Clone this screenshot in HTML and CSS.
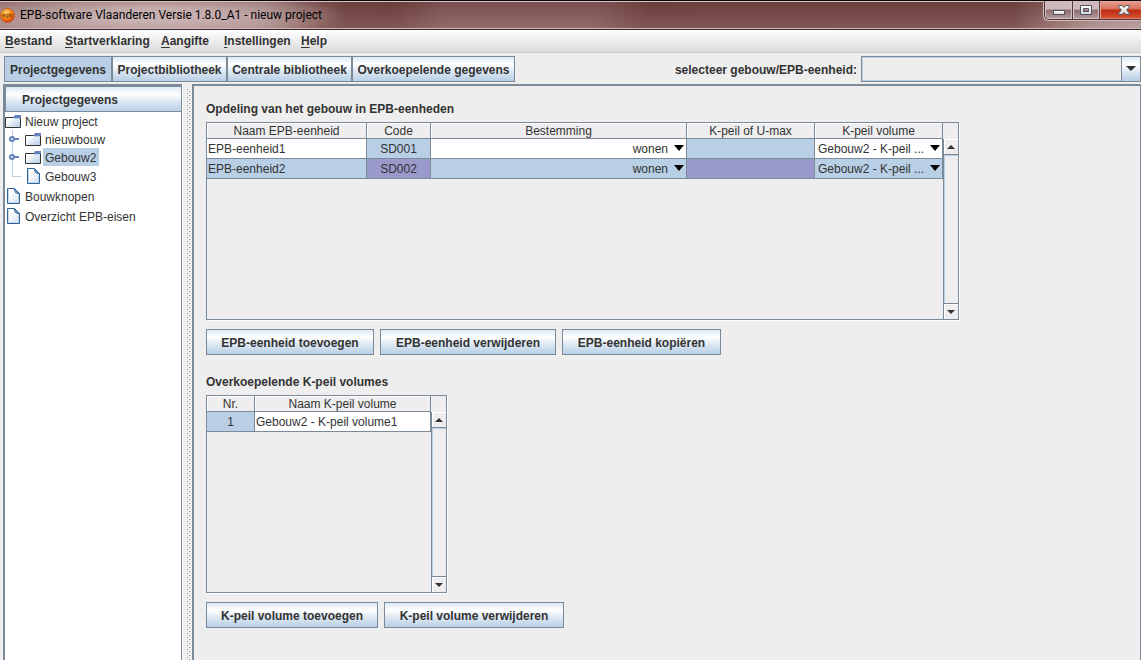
FILE: index.html
```html
<!DOCTYPE html>
<html lang="nl">
<head>
<meta charset="utf-8">
<title>EPB-software Vlaanderen Versie 1.8.0_A1 - nieuw project</title>
<link rel="stylesheet" href="styles.css">
</head>
<body>
<svg class="defs" width="0" height="0" aria-hidden="true">
  <defs>
    <linearGradient id="folder-fill" x1="0" y1="0" x2="1" y2="1">
      <stop offset="0.2" stop-color="#ffffff"/><stop offset="1" stop-color="#b0c9e4"/>
    </linearGradient>
    <linearGradient id="page-fill" x1="0" y1="0" x2="1" y2="1">
      <stop offset="0.3" stop-color="#ffffff"/><stop offset="1" stop-color="#cfdff0"/>
    </linearGradient>
    <radialGradient id="logo-fill" cx="0.4" cy="0.3" r="0.7">
      <stop offset="0" stop-color="#ffd070"/><stop offset="0.5" stop-color="#f59018"/><stop offset="1" stop-color="#d8400c"/>
    </radialGradient>
    <linearGradient id="glyph-fill" x1="0" y1="0" x2="0" y2="1">
      <stop offset="0" stop-color="#ffffff"/><stop offset="1" stop-color="#d4d4d4"/>
    </linearGradient>
  </defs>
  <symbol id="folder" viewBox="0 0 16 13">
    <path d="M.5 2.500H15.500V12.500H.5Z" fill="url(#folder-fill)" stroke="#333"/>
    <path d="M1.500 11.500V3.500H9" fill="none" stroke="#fff"/>
    <path d="M8 3 10 0H16V3Z" fill="#6382bf"/>
    <path d="M9 3.500H15" stroke="#b8cfe5"/>
  </symbol>
  <symbol id="page" viewBox="0 0 13 16">
    <path d="M.5.5H7.500L12.500 5.500V15.500H.5Z" fill="url(#page-fill)" stroke="#2f6296"/>
    <path d="M7 .5 8.500 4.500 12.500 6Z" fill="#b8cfe5" stroke="#2f6296"/>
    <path d="M1.500 1.500V14.500H11.500V7" fill="none" stroke="#c3d7ea"/>
  </symbol>
  <symbol id="handle" viewBox="0 0 11 6">
    <circle cx="3" cy="3" r="2" fill="#fff" stroke="#6382bf" stroke-width="2"/>
    <path d="M6 3H10" stroke="#6382bf" stroke-width="2"/>
  </symbol>
  <symbol id="down" viewBox="0 0 10 5" preserveAspectRatio="none"><path d="M0 0H10L5 5Z" fill="currentColor"/></symbol>
  <symbol id="up" viewBox="0 0 10 5" preserveAspectRatio="none"><path d="M0 5H10L5 0Z" fill="currentColor"/></symbol>
</svg>

<div class="window">
  <header class="titlebar">
    <svg class="logo" viewBox="0 0 15 15" aria-hidden="true">
      <circle cx="7.500" cy="7.500" r="7" fill="url(#logo-fill)" stroke="#b84a18" stroke-width=".6"/>
      <g fill="none" stroke="#7d3a08" stroke-width=".8"><path d="M5.300 7.300H3.200M5.200 8.700H3.800A1.300 1.300 0 1 1 5.300 7.300M6.800 10V6.300H7.600A1.200 1.200 0 1 1 7.600 8.700H6.800M10 5V8.700H11A1.200 1.200 0 1 0 11 6.300H10"/></g>
    </svg>
    <span class="title">EPB-software Vlaanderen Versie 1.8.0_A1 - nieuw project</span>
    <div class="window-buttons">
      <button class="win-btn min" type="button" aria-label="Minimaliseren"><svg width="12" height="6" viewBox="0 0 12 6"><rect x=".5" y=".5" width="11" height="4" fill="url(#glyph-fill)" stroke="#53535f"/></svg></button>
      <button class="win-btn max" type="button" aria-label="Maximaliseren"><svg width="12" height="10" viewBox="0 0 12 10"><path d="M.5.5H11.500V9.500H.5ZM3.500 3.500V6.500H8.500V3.500Z" fill="url(#glyph-fill)" fill-rule="evenodd" stroke="#53535f"/></svg></button>
      <button class="win-btn close" type="button" aria-label="Sluiten"><svg width="12" height="10" viewBox="0 0 12 10"><path d="M.7.5H4L6 2.500 8 .5H11.300V2L8.600 5 11.300 8V9.500H8L6 7.500 4 9.500H.7V8L3.400 5 .7 2Z" fill="url(#glyph-fill)" stroke="#53535f"/></svg></button>
    </div>
  </header>

  <nav class="menubar" aria-label="Menu">
    <button class="m-file" type="button"><u>B</u>estand</button>
    <button class="m-start" type="button"><u>S</u>tartverklaring</button>
    <button class="m-report" type="button"><u>A</u>angifte</button>
    <button class="m-settings" type="button"><u>I</u>nstellingen</button>
    <button type="button"><u>H</u>elp</button>
  </nav>

  <div class="toolbar">
    <div class="tabs">
      <button class="tab tab-project selected" type="button">Projectgegevens</button>
      <button class="tab tab-library" type="button">Projectbibliotheek</button>
      <button class="tab tab-central" type="button">Centrale bibliotheek</button>
      <button class="tab tab-global" type="button">Overkoepelende gegevens</button>
    </div>
    <label class="picker-label" for="unit">selecteer gebouw/EPB-eenheid:</label>
    <div class="picker">
      <select id="unit"><option></option></select>
      <span class="picker-arrow"><svg width="10" height="5"><use href="#down"/></svg></span>
    </div>
  </div>

  <div class="workspace">
    <aside class="sidebar">
      <button class="side-head" type="button">Projectgegevens</button>
      <ul class="tree">
        <li><div class="node"><svg class="folder"><use href="#folder"/></svg><span>Nieuw project</span></div>
          <ul class="branch">
            <li class="node"><svg class="handle"><use href="#handle"/></svg><svg class="folder"><use href="#folder"/></svg><span>nieuwbouw</span></li>
            <li class="node"><svg class="handle"><use href="#handle"/></svg><svg class="folder"><use href="#folder"/></svg><span class="picked">Gebouw2</span></li>
            <li class="node leaf last"><i class="elbow"></i><svg class="page"><use href="#page"/></svg><span>Gebouw3</span></li>
          </ul>
        </li>
        <li class="node leaf"><svg class="page"><use href="#page"/></svg><span>Bouwknopen</span></li>
        <li class="node leaf"><svg class="page"><use href="#page"/></svg><span>Overzicht EPB-eisen</span></li>
      </ul>
    </aside>
    <div class="divider"><svg width="4" height="100%"><defs><pattern id="bumps" width="4" height="4" patternUnits="userSpaceOnUse"><path d="M0 0h1v1H0ZM2 2h1v1H2Z" fill="#fff"/><path d="M1 1h1v1H1ZM3 3h1v1H3Z" fill="#7a8a99"/></pattern></defs><rect width="4" height="100%" fill="url(#bumps)"/></svg></div>

    <main class="content">
      <h2>Opdeling van het gebouw in EPB-eenheden</h2>
      <div class="grid-pane">
        <div class="viewport">
          <table class="units">
            <colgroup><col class="c-name"><col class="c-code"><col class="c-use"><col class="c-level"><col class="c-level"></colgroup>
            <thead><tr><th>Naam EPB-eenheid</th><th>Code</th><th>Bestemming</th><th>K-peil of U-max</th><th>K-peil volume</th></tr></thead>
            <tbody>
              <tr>
                <td>EPB-eenheid1</td><td class="locked">SD001</td>
                <td class="combo right"><select aria-label="Bestemming EPB-eenheid1"><option>wonen</option></select><svg><use href="#down"/></svg></td>
                <td class="locked"></td>
                <td class="combo"><select aria-label="K-peil volume EPB-eenheid1"><option>Gebouw2 - K-peil ...</option></select><svg><use href="#down"/></svg></td>
              </tr>
              <tr class="active">
                <td>EPB-eenheid2</td><td class="locked">SD002</td>
                <td class="combo right"><select aria-label="Bestemming EPB-eenheid2"><option>wonen</option></select><svg><use href="#down"/></svg></td>
                <td class="locked"></td>
                <td class="combo"><select aria-label="K-peil volume EPB-eenheid2"><option>Gebouw2 - K-peil ...</option></select><svg><use href="#down"/></svg></td>
              </tr>
            </tbody>
          </table>
        </div>
        <div class="scroll">
          <div class="corner"></div>
          <button class="step" type="button" aria-label="Omhoog"><svg><use href="#up"/></svg></button>
          <div class="track"></div>
          <button class="step end" type="button" aria-label="Omlaag"><svg><use href="#down"/></svg></button>
        </div>
      </div>
      <div class="actions">
        <button type="button" class="w-add">EPB-eenheid toevoegen</button>
        <button type="button" class="w-del">EPB-eenheid verwijderen</button>
        <button type="button" class="w-copy">EPB-eenheid kopiëren</button>
      </div>

      <h2>Overkoepelende K-peil volumes</h2>
      <div class="grid-pane">
        <div class="viewport">
          <table class="volumes">
            <colgroup><col class="c-nr"><col class="c-volume"></colgroup>
            <thead><tr><th>Nr.</th><th>Naam K-peil volume</th></tr></thead>
            <tbody><tr><td class="locked">1</td><td>Gebouw2 - K-peil volume1</td></tr></tbody>
          </table>
        </div>
        <div class="scroll">
          <div class="corner"></div>
          <button class="step" type="button" aria-label="Omhoog"><svg><use href="#up"/></svg></button>
          <div class="track"></div>
          <button class="step end" type="button" aria-label="Omlaag"><svg><use href="#down"/></svg></button>
        </div>
      </div>
      <div class="actions">
        <button type="button" class="w-vadd">K-peil volume toevoegen</button>
        <button type="button" class="w-vdel">K-peil volume verwijderen</button>
      </div>
    </main>
  </div>
</div>
</body>
</html>
```
FILE: styles.css
```css
:root {
  --line: #7a8a99;
  --face: #eeeeee;
  --pick: #b8cfe5;
  --ink: #333333;
  --metal: linear-gradient(#dde8f3 0%, #ffffff 30%, #dde8f3 60%, #b8cfe5 100%);
}
* { box-sizing: border-box; }
body { margin: 0; }
button, select, table { font: inherit; color: inherit; }
button { margin: 0; padding: 0; border: 0; background: none; }
ul { list-style: none; margin: 0; padding: 0; }
svg { display: block; flex: none; }
.defs { position: absolute; }

.window {
  display: flex;
  flex-direction: column;
  height: 100vh;
  overflow: hidden;
  background: var(--face);
  color: var(--ink);
  font: 12px/16px "Liberation Sans", Arial, sans-serif;
}

/* Title bar */
.titlebar {
  display: flex;
  align-items: flex-start;
  flex: none;
  height: 30px;
  border-top: 1px solid #0c0306;
  border-bottom: 1px solid #3a2a2a;
  box-shadow: inset 0 1px #d9c3c3, inset 0 -1px #c9b4b4;
  background:
    radial-gradient(ellipse 190px 22px at 155px 14px, rgba(215, 196, 196, .7) 30%, rgba(190, 160, 160, 0) 100%),
    linear-gradient(rgba(60, 15, 15, .2), rgba(255, 220, 220, .1)),
    linear-gradient(100deg, #a88787 0, #a78585 260px, #744946 345px, #744846 390px, #875f5f 440px, #875f5f 590px, #744845 640px, #754a47 1000px, #ad8f8f 1080px, #b59a9a 100%);
}
.logo { width: 15px; height: 15px; margin-top: 7px; }
.title {
  flex: 1;
  padding: 6px 0 0 5px;
  color: #000;
  font-family: Roboto, "Open Sans", sans-serif;
}
.window-buttons {
  display: flex;
  height: 19px;
  border: 1px solid #4d3536;
  border-width: 0 0 1px 1px;
  border-radius: 0 0 0 5px;
  box-shadow: -1px 1px #d3bebe;
  overflow: hidden;
}
.win-btn {
  display: grid;
  place-items: center;
  height: 18px;
  border-right: 1px solid #553c3d;
  box-shadow: inset 0 0 0 1px #d5c1c3;
  background: linear-gradient(#cdb9bb 0 45%, #8e6d70 50%, #b59da1 100%);
}
.min { width: 28px; padding-top: 5px; }
.max { width: 27px; }
.close {
  width: 41px;
  padding-left: 6px;
  border-right: 0;
  box-shadow: inset 1px 1px #e8a598, inset 0 -1px #e08070;
  background: linear-gradient(#e5a090 0, #d9705a 45%, #bd2810 50%, #d9583b 100%);
}

/* Menu and tabs */
.menubar {
  display: flex;
  flex: none;
  height: 23px;
  padding: 0 5px;
  border-bottom: 1px solid #cccccc;
  background: linear-gradient(#ffffff, #dadada);
  font-weight: bold;
}
.menubar button { text-align: left; }
.menubar u { text-underline-offset: 2px; }
.m-file { width: 60px; }
.m-start { width: 96px; }
.m-report { width: 63px; }
.m-settings { width: 77px; }
.toolbar {
  display: flex;
  flex: none;
  align-items: center;
  height: 31px;
  padding: 2px 0 2px 4px;
  font-weight: bold;
}
.tabs { display: flex; flex: 1; }
.tab {
  height: 26px;
  padding-top: 2px;
  border: 1px solid var(--line);
  background: var(--metal);
  white-space: nowrap;
}
.tab.selected { background: var(--pick); }
.tab-project { width: 108px; }
.tab-library { width: 115px; }
.tab-central { width: 125px; }
.tab-global { width: 163px; }
.picker-label { margin-right: 4px; padding-top: 2px; white-space: nowrap; }
.picker { position: relative; width: 280px; height: 26px; }
.picker select {
  width: 100%;
  height: 100%;
  padding: 0 24px 0 4px;
  border: 1px solid var(--line);
  border-radius: 0;
  background: var(--face);
  box-shadow: inset 0 0 0 1px var(--pick);
  appearance: none;
}
.picker-arrow {
  position: absolute;
  inset: 0 0 0 auto;
  display: grid;
  place-items: center;
  width: 20px;
  border: 1px solid var(--line);
  background: var(--metal);
  pointer-events: none;
}

/* Sidebar */
.workspace { display: flex; flex: 1; min-height: 0; padding-left: 3px; }
.sidebar {
  display: flex;
  flex-direction: column;
  width: 179px;
  border: solid var(--line);
  border-width: 2px 1px 0 2px;
  box-shadow: 1px 0 #fff;
  background: #fff;
}
.side-head {
  height: 26px;
  padding: 2px 0 0 16px;
  border: 1px solid var(--line);
  border-right-width: 0;
  background: var(--metal);
  font-weight: bold;
  text-align: left;
}
.node { display: flex; align-items: center; height: 18px; }
.leaf { height: 20px; }
.node span { padding: 2px 3px 0 2px; margin-left: 2px; white-space: nowrap; }
.folder { width: 16px; height: 13px; }
.page { width: 13px; height: 16px; margin: 0 1px 0 2px; }
.handle { width: 11px; height: 6px; margin-right: 5px; z-index: 1; }
.picked { background: var(--pick); }
.branch { padding-left: 4px; background: linear-gradient(var(--pick), var(--pick)) 7px 0 / 1px 47px no-repeat; }
.elbow { width: 9px; height: 1px; margin: 0 3px 0 3px; background: var(--pick); }
.last .page { margin-left: 3px; }
.divider { width: 10px; padding: 4px 0 0 4px; overflow: hidden; }

/* Content */
.content {
  flex: 1;
  min-width: 0;
  padding: 14px 12px;
  border: solid var(--line);
  border-width: 2px 1px 0 2px;
  overflow: hidden;
}
h2 { margin: 0 0 5px; padding-top: 1px; font-size: 12px; line-height: 16px; font-weight: bold; }
.grid-pane {
  display: inline-flex;
  height: 198px;
  border: 1px solid var(--line);
  box-shadow: 1px 1px #fff;
  vertical-align: top;
}
table { table-layout: fixed; border-collapse: separate; border-spacing: 0; }
.units { width: 736px; }
.volumes { width: 224px; }
.c-name { width: 160px; }
.c-code { width: 64px; }
.c-use { width: 256px; }
.c-level { width: 128px; }
.c-nr { width: 48px; }
.c-volume { width: 176px; }
th, td { padding: 2px 0 0; border: solid var(--line); border-width: 0 1px 1px 0; white-space: nowrap; }
th { height: 16px; line-height: 13px; font-weight: normal; box-shadow: inset 1px 1px #fff; }
td { height: 20px; line-height: 17px; padding-left: 1px; background: #fff; }
.locked { padding-left: 0; background: var(--pick); text-align: center; }
.active td { background: var(--pick); }
.active .locked { background: #9999cc; }
.combo { position: relative; padding: 0; }
.combo select {
  display: block;
  width: 100%;
  height: 19px;
  padding: 2px 16px 0 3px;
  border: 0;
  background: none;
  appearance: none;
}
.combo.right select { text-align-last: right; padding-right: 18px; }
.combo svg {
  position: absolute;
  top: 6px;
  right: 2px;
  width: 10px;
  height: 6px;
  color: #000;
  pointer-events: none;
}
.scroll { display: flex; flex-direction: column; width: 15px; }
.corner { height: 16px; }
.step {
  display: grid;
  place-items: center;
  height: 16px;
  border: solid var(--line);
  border-width: 0 0 1px 1px;
  box-shadow: inset 1px 1px #fff;
}
.step svg { width: 8px; height: 4px; }
.step.end { border-width: 1px 0 0 1px; }
.track { flex: 1; border-left: 1px solid var(--line); box-shadow: inset 1px 1px var(--pick); }

.actions { display: flex; gap: 6px; margin: 9px 0 18px; }
.actions button {
  height: 26px;
  padding-top: 2px;
  border: 1px solid var(--line);
  background: var(--metal);
  font-weight: bold;
  white-space: nowrap;
}
.w-add { width: 168px; }
.w-del { width: 176px; }
.w-copy { width: 159px; }
.w-vadd { width: 172px; }
.w-vdel { width: 180px; }
```
